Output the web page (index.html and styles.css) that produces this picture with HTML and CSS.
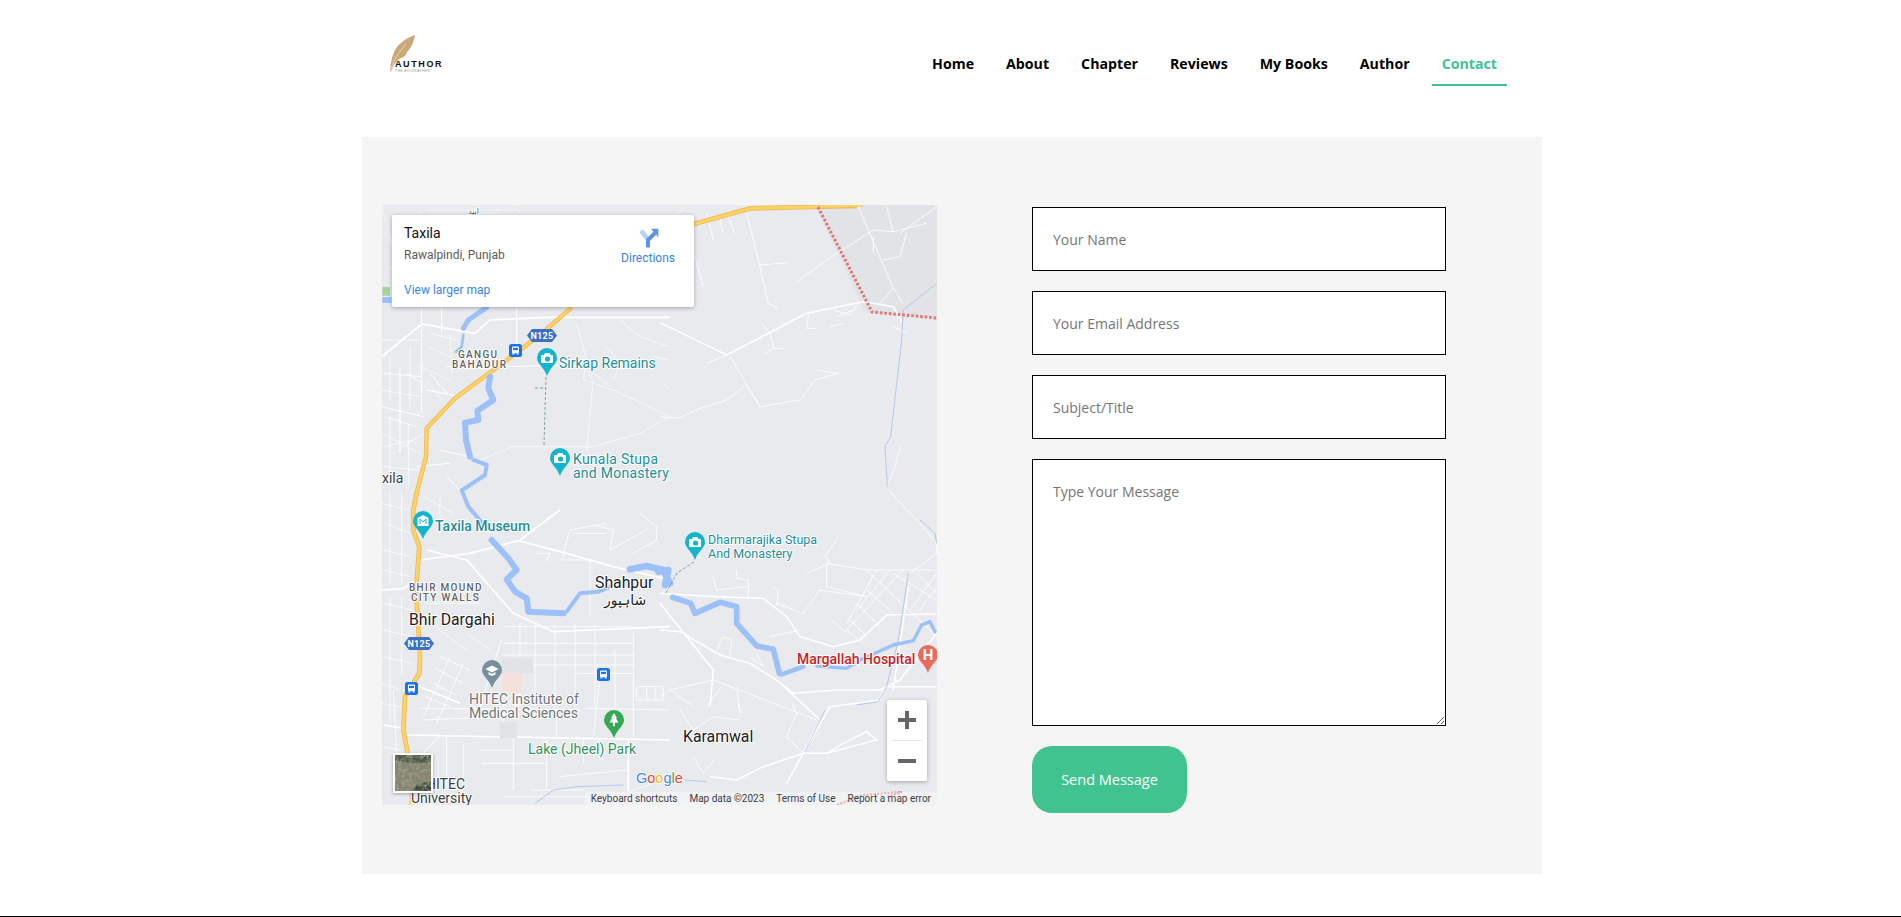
FILE: index.html
```html
<!DOCTYPE html>
<html lang="en">
<head>
<meta charset="utf-8">
<title>Contact</title>
<link rel="stylesheet" href="styles.css">
</head>
<body>
<div class="page">
  <header class="header">
    <a class="logo" href="#">
      <svg class="logo-feather" viewBox="0 0 30 40" width="30" height="40" aria-hidden="true">
        <path d="M3 39 C4 26 6 20 10 14 C15 8 22 4 28 2 C27 9 24 15 20 19 C19 23 15 25 12 26 C9 29 6 32 4 39 Z" fill="#cba878"/>
        <path d="M3 39 C6 28 11 20 19 11" stroke="#fff" stroke-width=".5" fill="none"/>
      </svg>
      <span class="logo-text">
        <span class="logo-name">AUTHOR</span>
        <span class="logo-sub">THE BIOGRAPHER</span>
      </span>
    </a>
    <nav class="nav">
      <a href="#">Home</a>
      <a href="#">About</a>
      <a href="#">Chapter</a>
      <a href="#">Reviews</a>
      <a href="#">My Books</a>
      <a href="#">Author</a>
      <a href="#" class="active">Contact</a>
    </nav>
  </header>

  <main class="panel">
    <div class="map">
      <svg class="map-art" viewBox="0 0 555 600" width="555" height="600" aria-hidden="true">
        <defs>
          <path id="pin" d="M10 0 A10 10 0 0 1 20 10 C20 16 13 19 10 28 C7 19 0 16 0 10 A10 10 0 0 1 10 0Z"/>
          <g id="camera">
            <path d="M4 8 Q4 7 5 7 H7 L8 5 H12.500 L13.500 7 H15 Q16 7 16 8 V14 Q16 15 15 15 H5 Q4 15 4 14Z" fill="#fff"/>
            <circle cx="10.500" cy="11" r="2.600" fill="#12b5cb"/>
          </g>
          <g id="busicon">
            <rect width="13" height="13" rx="2.500" fill="#1a73e8"/>
            <rect x="3" y="2.500" width="7" height="6.800" rx="1" fill="#fff"/>
            <rect x="4" y="3.800" width="5" height="2.300" fill="#1a73e8"/>
            <rect x="3.500" y="9" width="1.700" height="1.500" fill="#fff"/>
            <rect x="7.800" y="9" width="1.700" height="1.500" fill="#fff"/>
          </g>
          <path id="shield" d="M5 0 H25 L30 6.500 L25 13 H5 L0 6.500Z" fill="#3b70c4"/>
        </defs>
        <rect width="555" height="600" fill="#e8eaed"/>
        <path d="M433 0 L555 0 L555 115 L483 107 L433 0Z" fill="#e1e3e6"/>

        <!-- crop 3: top-left -->
        <g transform="translate(-2,-5) scale(.33333)" fill="none" stroke="#fff" stroke-width="3">
          <path stroke-width="5" d="M5 470 L125 372 L285 400 L330 360 L500 352 L870 352"/>
          <path d="M410 320 V440 M125 320 V640 M185 320 V400 M5 620 L130 650 M60 500 V760 M10 520 L125 530 M140 570 L240 590 M150 520 L200 580 M200 500 L370 505 M370 500 L620 495"/>
          <path stroke-width="2" d="M590 370 L620 480 L610 540 L700 570 L870 650 M680 440 L720 490 L700 540 M610 500 L640 540 L620 750 M640 520 L690 560 M620 740 L400 740 L300 780 M620 745 L780 700 L870 650 M820 470 L870 480 M720 360 L780 410 L870 440 M5 700 L120 760 M40 760 L130 700"/>
          <path d="M180 750 L270 770 M200 830 L240 870 M210 790 L110 800 M850 810 L870 805"/>
          <path stroke-width="2" d="M5 420 L120 420 M5 570 L120 590 M30 470 V600 M90 440 V620 M15 650 L110 680 M10 740 L100 720 M30 650 V860 M85 670 V860 M10 800 L120 810 M150 400 L230 420 M140 440 L210 470 M210 400 L215 520 M120 500 L210 540 M140 540 L185 600 M80 520 L140 560"/>
          <path stroke-width="1.500" d="M5 20 L40 150 M20 200 L100 240 M120 30 L140 130 M5 90 L36 130 M140 30 H410 M290 40 H360 M400 15 L425 45"/>
        </g>

        <!-- crop 4: top-right -->
        <g transform="translate(278,-5) scale(.33333)" fill="none" stroke="#fff" stroke-width="2.500">
          <path d="M260 40 L300 200 L325 310 L355 325 M300 195 L385 188 M105 170 L130 260 M140 40 L160 120 M180 55 L190 100 M205 50 L225 100"/>
          <path stroke-width="4.500" d="M0 368 L200 465 L440 340 L610 305 L700 320 L725 365"/>
          <path d="M200 465 L140 490 M210 470 L300 620 L420 600 L465 540 L535 520 L470 510 M300 620 L260 555 L200 600 L120 625 L55 655 L0 650 M330 400 L305 370 M330 400 L340 445 L315 460 M340 445 L370 445 M445 340 L440 385 L470 385 M520 330 L570 345 L590 315 M530 350 L580 330 M510 380 L550 370 M410 245 L500 180 L640 90 L700 95 L800 70 M595 20 L700 265 L660 310 M700 265 L730 310 M680 20 L700 95 M720 100 L830 20 M640 160 L640 110 M670 180 L720 170 L740 100 M700 380 L740 400 M720 740 L705 800 L680 860 M10 550 L25 565"/>
          <path d="M75 20 L50 45"/>
          <path stroke="#a9c2e8" d="M830 250 L730 330 L725 420 L692 710 L675 740 L682 860"/>
        </g>

        <!-- crop 5: bottom-left -->
        <g transform="translate(-2,285) scale(.33333)" fill="none" stroke="#fff" stroke-width="2.500">
          <path stroke-width="5" d="M5 300 L70 295 L115 265 M120 210 L270 190 L415 152 L560 190 L700 230 L870 270 M140 180 L260 210 L400 370 L520 425 L870 410 M75 735 L870 750 M10 705 L70 715 M745 745 V905 M120 590 L240 640 M540 60 L420 150"/>
          <path d="M375 410 H760 M370 460 H760 M365 495 H765 M365 525 H765 M590 550 H760 M420 400 V650 M465 400 V650 M525 400 V650 M585 400 V650 M645 400 V650 M705 480 V720 M760 430 V740 M365 450 L300 650 M180 500 L270 540 M165 535 L250 580 M150 575 L230 615 M135 620 L210 650 M210 500 L130 680 M250 520 L170 700 M120 655 L600 660 M620 655 L870 660 M130 690 L360 680 M370 640 V740 M530 660 V740 M660 560 L640 740 M770 590 H850 V630 H770 Z M800 590 V630 M825 590 V630 M200 740 V900 M250 760 V880 M300 780 H400 M400 740 V900 M305 820 H500 M500 750 V900 M610 745 V820 M90 790 H30 M40 600 L50 800 M680 100 L570 120 L545 210 L630 210 L630 380 M640 105 L700 120 L690 180 L800 120 M780 70 L830 110 L830 150 L760 190 M580 130 H680 M470 190 L510 190 L500 215 M130 790 L180 735 M540 860 L740 840 M450 900 H610 M370 920 H620 M750 905 L870 860"/>
          <path stroke-width="2" d="M5 40 L90 60 M15 100 L90 130 M30 0 V280 M65 0 V280 M10 180 L90 200 M10 240 L90 260 M10 340 L100 360 M10 420 L100 440 M30 320 V700 M65 320 V560 M10 500 L100 520 M5 580 L60 600 M5 640 L60 650 M130 20 L220 70 M140 70 L200 120 M180 20 V130 M140 340 L300 340 M150 400 L260 480 M260 430 L330 480 M10 770 L60 780"/>
          <path stroke="#a9c2e8" d="M465 940 L520 900 L590 890 L730 885"/>
        </g>

        <!-- crop 6: bottom-right -->
        <g transform="translate(278,285) scale(.33333)" fill="none" stroke="#fff" stroke-width="2.500">
          <path stroke-width="4.500" d="M0 310 L170 320 L310 325 L380 380 L420 440 L520 470 L600 450 L680 375 L830 372 M0 420 L60 425 L180 495 L270 520 L350 570 L400 610 L530 600 L660 600 L720 570 L830 430 M0 340 L160 540 L150 650 M350 570 L480 690 M480 690 L430 790 L380 880 M670 600 L660 630 L510 650 L430 790 L310 830 L230 870 L150 860 M430 790 L500 790 L650 750 L620 725 L550 760 L500 790 M685 590 L830 590 M745 290 L700 600"/>
          <path d="M500 220 L620 240 L830 240 M620 240 L830 440 M650 240 L560 400 M690 240 L590 360 M730 240 L560 420 L610 460 M620 300 L700 370 M590 340 L660 410 M570 390 L620 440 M700 250 L830 330 M770 250 L830 310 M830 250 L750 360 M830 290 L780 360 M500 220 V270 L500 290 L620 320 L480 300 L430 370 L350 340 M230 240 V265 L265 270 V320 M335 290 L355 300 L350 345 M160 260 L170 300 L260 290 M530 150 L495 200 L510 220 L440 250 M685 0 L770 90 L830 160 V190 L750 250 M515 390 L560 430 M330 440 L420 420 M170 480 L190 440 L215 450 L210 495 M270 500 L310 530 L290 490 M395 640 L410 670 L380 740 L430 790 M230 590 L240 670 L235 640 M100 650 L30 600 L0 620 M30 600 L160 570 L470 690 M60 660 L100 720 L160 680 L240 690 M100 800 L130 850 L160 810 M185 590 L140 650"/>
          <path stroke="#a9c2e8" stroke-width="2.500" d="M745 250 L715 450 L680 590 L655 635 L590 645 M495 660 L435 785"/>
          <path stroke="#a9c2e8" d="M75 870 L140 875 M830 160 L825 130 L780 90"/>
        </g>

        <!-- highway -->
        <g transform="translate(-2,-5) scale(.33333)" fill="none" stroke-linejoin="round">
          <path stroke="#f0b94d" stroke-width="13" d="M575 322 L480 405 L340 510 L225 595 L140 685 L138 770 L112 870"/>
          <path stroke="#fdd268" stroke-width="8" d="M575 322 L480 405 L340 510 L225 595 L140 685 L138 770 L112 870"/>
        </g>
        <g transform="translate(278,-5) scale(.33333)" fill="none" stroke-linejoin="round">
          <path stroke="#f0b94d" stroke-width="14" d="M102 72 L272 25 L480 20 L590 18"/>
          <path stroke="#fdd268" stroke-width="9" d="M102 72 L272 25 L480 20 L610 15"/>
        </g>
        <g transform="translate(-2,285) scale(.33333)" fill="none" stroke-linejoin="round">
          <path stroke="#f0b94d" stroke-width="14" d="M112 0 L100 60 L100 120 L118 170 L108 300 L120 500 L118 550 L75 620 L70 720 L85 800"/>
          <path stroke="#fdd268" stroke-width="9" d="M112 0 L100 60 L100 120 L118 170 L108 300 L120 500 L118 550 L75 620 L70 720 L85 800"/>
          <path stroke="#fdd268" stroke-width="6" d="M90 910 V945"/>
        </g>

        <!-- river -->
        <g transform="translate(-2,-5) scale(.33333)" fill="none" stroke="#9cc0f9" stroke-linecap="round" stroke-linejoin="round">
          <path stroke-width="15" d="M320 322 L265 360 L250 385"/>
          <path stroke-width="8" d="M250 405 L245 440 L228 455"/>
          <path stroke-width="18" d="M330 530 L325 565 L340 600 L292 632 L295 660 L255 668 L258 720 L270 770"/>
          <path stroke-width="12" d="M280 780 L320 795 L315 825 L250 868"/>
          <path stroke-width="26" stroke="#a9d19b" stroke-linecap="butt" d="M7 274 H30"/>
          <path stroke-width="18" stroke-linecap="butt" d="M7 300 H34"/>
        </g>
        <g transform="translate(-2,285) scale(.33333)" fill="none" stroke="#9cc0f9" stroke-linecap="round" stroke-linejoin="round">
          <path stroke-width="12" d="M245 0 L265 50 L320 115"/>
          <path stroke-width="18" d="M335 150 L385 205 L410 240 L380 268 L405 305 L440 325 L445 365 L550 370"/>
          <path stroke-width="12" d="M560 365 L600 310 L655 305 L690 290"/>
          <path stroke-width="20" d="M750 238 L800 228 L850 240 L870 280"/>
        </g>
        <g transform="translate(278,285) scale(.33333)" fill="none" stroke="#9cc0f9" stroke-linecap="round" stroke-linejoin="round">
          <path stroke-width="20" d="M-5 245 L25 240 L15 285"/>
          <path stroke-width="17" d="M38 322 L92 340 L105 370 L180 337 L230 350 L230 400 L290 468 L340 478 L358 550"/>
          <path stroke-width="14" d="M365 553 L430 530"/>
          <path stroke-width="10" d="M470 528 L560 535 L600 510 L700 465 L760 452 L785 405 L810 395 L825 425"/>
        </g>

        <!-- building tints -->
        <rect x="120" y="453" width="31" height="15" fill="#e1e3e6"/>
        <rect x="120" y="468" width="20" height="20" fill="#f6e0dc"/>
        <rect x="118" y="517" width="17" height="16" fill="#e1e3e6"/>

        <!-- dashed trails -->
        <path d="M164 172 L162 240 M153 183 H164" stroke="#7fa98f" stroke-width="1" stroke-dasharray="3 2" fill="none"/>
        <path d="M312 357 L295 368 L284 388" stroke="#7fa98f" stroke-width="1" stroke-dasharray="3 2" fill="none"/>

        <!-- border lines -->
        <path d="M436 2 L490 107 L555 113" stroke="#e07777" stroke-width="3" stroke-dasharray="2.500 2" fill="none"/>
        <path d="M455 600 L480 590 L520 587 L505 592" stroke="#e07777" stroke-width="2" stroke-dasharray="2 1.500" fill="none"/>

        <!-- bus stops -->
        <use href="#busicon" x="127" y="139"/>
        <use href="#busicon" x="23" y="477"/>
        <use href="#busicon" x="215" y="463"/>

        <!-- shields -->
        <g transform="translate(145,124)"><use href="#shield"/><text x="15" y="10" class="shield">N125</text></g>
        <g transform="translate(22,432)"><use href="#shield"/><text x="15" y="10" class="shield">N125</text></g>

        <!-- pins -->
        <g transform="translate(155,143)"><use href="#pin" fill="#12b5cb"/><use href="#camera"/></g>
        <g transform="translate(168,243)"><use href="#pin" fill="#12b5cb"/><use href="#camera"/></g>
        <g transform="translate(303,327)"><use href="#pin" fill="#12b5cb"/><use href="#camera"/></g>
        <g transform="translate(31,306)"><use href="#pin" fill="#12b5cb"/><path d="M4.500 15 V7 L10 4 L15.500 7 V15Z" fill="#fff"/><path d="M7 13 V8 L10 11 L13 8 V13" stroke="#12b5cb" stroke-width="1" fill="none"/></g>
        <g transform="translate(100,455)"><use href="#pin" fill="#78909c"/><path d="M3.500 9 L10 5.500 L16.500 9 L10 12.500Z M6.500 12 L10 14 L13.500 12 V14.500 L10 16 L6.500 14.500Z" fill="#fff"/></g>
        <g transform="translate(222,505)"><use href="#pin" fill="#34a853"/><path d="M10 3 L13 8 H11.800 L14.500 12.500 H11 V16 H9 V12.500 H5.500 L8.200 8 H7Z" fill="#fff"/></g>
        <g transform="translate(536,440)"><use href="#pin" fill="#ea6a5e"/><text x="10" y="15" class="pin-h">H</text></g>

        <!-- labels -->
        <text x="86" y="9" class="town tiny">ابید</text>
        <text x="177" y="163" class="lbl teal">Sirkap Remains</text>
        <text x="191" y="259" class="lbl teal wide">Kunala Stupa</text>
        <text x="191" y="273" class="lbl teal wide">and Monastery</text>
        <text x="326" y="339" class="lbl teal sm">Dharmarajika Stupa</text>
        <text x="326" y="353" class="lbl teal sm">And Monastery</text>
        <text x="53" y="326" class="lbl teal bold">Taxila Museum</text>
        <text x="0" y="278" class="lbl dark">xila</text>
        <text x="76" y="153" class="caps">GANGU</text>
        <text x="70" y="163" class="caps">BAHADUR</text>
        <text x="27" y="386" class="caps">BHIR MOUND</text>
        <text x="29" y="396" class="caps">CITY WALLS</text>
        <text x="27" y="420" class="town">Bhir Dargahi</text>
        <text x="213" y="383" class="town">Shahpur</text>
        <text x="222" y="400" class="town urdu">شاہپور</text>
        <text x="301" y="537" class="town">Karamwal</text>
        <text x="87" y="499" class="lbl edu">HITEC Institute of</text>
        <text x="87" y="513" class="lbl edu">Medical Sciences</text>
        <text x="146" y="549" class="lbl park">Lake (Jheel) Park</text>
        <text x="415" y="459" class="lbl red">Margallah Hospital</text>
        <text x="44" y="584" class="lbl edu darker">HITEC</text>
        <text x="29" y="598" class="lbl edu darker">University</text>
        <text x="254" y="578" class="google"><tspan fill="#4285f4">G</tspan><tspan fill="#ea4335">o</tspan><tspan fill="#fbbc05">o</tspan><tspan fill="#4285f4">g</tspan><tspan fill="#34a853">l</tspan><tspan fill="#ea4335">e</tspan></text>
      </svg>

      <div class="info">
        <div class="info-main">
          <div class="info-title">Taxila</div>
          <div class="info-addr">Rawalpindi, Punjab</div>
          <a class="info-link" href="#">View larger map</a>
        </div>
        <a class="info-dir" href="#">
          <svg viewBox="0 0 22 22" width="22" height="22" aria-hidden="true">
            <path d="M4 4.700 L10.700 13" stroke="#b5d2f5" stroke-width="4.500" fill="none"/>
            <path d="M11 21.500 V14 L18 7" stroke="#5b94e3" stroke-width="4" fill="none"/>
            <path d="M14 2.800 H21.300 V11.300Z" fill="#5b94e3"/>
          </svg>
          <span class="info-dir-label">Directions</span>
        </a>
      </div>

      <div class="zoomctl">
        <button class="zoombtn" type="button" aria-label="Zoom in"><svg viewBox="0 0 18 18" width="18" height="18"><path d="M0 7 H7 V0 H11 V7 H18 V11 H11 V18 H7 V11 H0Z" fill="#666"/></svg></button>
        <div class="zoomsep"></div>
        <button class="zoombtn" type="button" aria-label="Zoom out"><svg viewBox="0 0 18 18" width="18" height="18"><rect y="7" width="18" height="4" fill="#666"/></svg></button>
      </div>

      <svg class="thumb" viewBox="0 0 36 36" width="36" height="36" aria-hidden="true">
        <filter id="sat" x="0" y="0" width="100%" height="100%">
          <feTurbulence type="fractalNoise" baseFrequency=".28" numOctaves="3" seed="7"/>
          <feColorMatrix type="matrix" values="0 0 0 0 .36  0 0 0 0 .38  0 0 0 0 .30  0 0 0 -1.800 1.150"/>
        </filter>
        <rect width="36" height="36" fill="#84836b"/>
        <path d="M0 0 H36 V7 L20 9 L0 5Z" fill="#4f5749"/>
        <path d="M20 30 L36 26 V36 H18Z" fill="#3f4a38"/>
        <rect width="36" height="36" filter="url(#sat)"/>
      </svg>

      <div class="attrib">
        <span>Keyboard shortcuts</span>
        <span>Map data ©2023</span>
        <span>Terms of Use</span>
        <span>Report a map error</span>
      </div>
    </div>

    <form class="form">
      <input class="field" type="text" placeholder="Your Name">
      <input class="field" type="email" placeholder="Your Email Address">
      <input class="field" type="text" placeholder="Subject/Title">
      <textarea class="field area" placeholder="Type Your Message"></textarea>
      <button class="send" type="button">Send Message</button>
    </form>
  </main>
</div>
<footer class="footer"></footer>
</body>
</html>
```

FILE: styles.css
```css
* { box-sizing: border-box; }
html, body { margin: 0; padding: 0; background: #fff; }
body { font-family: "Open Sans", "Noto Sans", sans-serif; height: 917px; overflow: hidden; display: flex; flex-direction: column; }

.page { width: 1180px; margin-left: 362px; }

.header { height: 137px; display: flex; justify-content: space-between; align-items: flex-start; }
.logo { display: flex; align-items: flex-end; margin: 33px 0 0 25px; text-decoration: none; }
.logo-feather { display: block; }
.logo-text { display: flex; flex-direction: column; margin-left: -22px; position: relative; top: 1px; }
.logo-name { font-family: "Liberation Sans", sans-serif; font-size: 9px; font-weight: 700; letter-spacing: 1.6px; color: #111; line-height: 9px; }
.logo-sub { font-family: "Liberation Sans", sans-serif; font-size: 3.5px; letter-spacing: .3px; color: #999; line-height: 5px; }

.nav { display: flex; gap: 12px; margin: 46px 35px 0 0; }
.nav a { display: block; height: 40px; padding: 8px 10px 0; font-size: 14.2px; line-height: 20px; font-weight: 700; color: #000; text-decoration: none; }
.nav a.active { color: #41c390; border-bottom: 2px solid #41c390; }

.panel { height: 737px; background: #f5f5f5; display: flex; align-items: flex-start; padding: 68px 0 0 20px; }

.map { position: relative; width: 555px; height: 600px; flex: none; overflow: hidden; font-family: Roboto, sans-serif; }
.map-art { display: block; }
.map-art text { font-family: Roboto, sans-serif; paint-order: stroke; stroke: #fff; stroke-width: 2px; stroke-linejoin: round; }
.lbl { font-size: 14px; }
.map-art .sm { font-size: 12.5px; }
.map-art .wide { letter-spacing: .25px; }
.teal { fill: #1e8e96; }
.lbl.bold { font-weight: 500; }
.dark { fill: #3c4043; }
.caps { font-size: 10px; letter-spacing: 1.3px; fill: #5f6368; font-weight: 500; }
.town { font-size: 15.8px; fill: #202124; }
.map-art .urdu { font-size: 14px; font-family: "DejaVu Sans", sans-serif; }
.map-art .tiny { font-size: 8px; font-family: "DejaVu Sans", sans-serif; fill: #5f6368; }
.edu { fill: #70757a; }
.edu.darker { fill: #3c4043; }
.park { fill: #2f9460; }
.red { fill: #c5221f; font-weight: 500; }
.map-art .shield { font-size: 9px; font-weight: 700; fill: #fff; text-anchor: middle; stroke: none; letter-spacing: .3px; }
.map-art .pin-h { font-size: 15px; font-weight: 700; fill: #fff; text-anchor: middle; stroke: none; }
.map-art .google { font-family: "Liberation Sans", sans-serif; font-size: 14.5px; font-weight: 400; stroke-width: 1.5px; }

.info { position: absolute; left: 10px; top: 10px; width: 302px; height: 92px; background: #fff; box-shadow: 0 1px 4px rgba(0,0,0,.3); border-radius: 2px; display: flex; justify-content: space-between; padding: 9px 19px 0 12px; }
.info-main { display: flex; flex-direction: column; }
.info-title { font-size: 14px; line-height: 18px; font-weight: 400; color: #111; }
.info-addr { font-size: 12px; line-height: 16px; margin-top: 5px; color: #5b5b5b; }
.info-link { font-size: 12px; line-height: 16px; margin-top: 19px; color: #3a84df; text-decoration: none; }
.info-dir { display: flex; flex-direction: column; align-items: center; font-size: 12px; line-height: 14px; color: #3a84df; text-decoration: none; padding-top: 2px; }
.info-dir-label { margin-top: 3px; }

.zoomctl { position: absolute; left: 505px; top: 495px; width: 40px; height: 81px; background: #fff; box-shadow: 0 1px 4px rgba(0,0,0,.3); border-radius: 2px; display: flex; flex-direction: column; align-items: center; }
.zoombtn { width: 40px; height: 40px; border: 0; padding: 0; background: none; display: flex; align-items: center; justify-content: center; }
.zoomsep { width: 30px; height: 1px; background: #e6e6e6; }

.thumb { position: absolute; left: 11px; top: 548px; width: 40px; height: 40px; border: 2px solid #fff; box-shadow: 0 1px 3px rgba(0,0,0,.3); }

.attrib { position: absolute; right: 0; bottom: 0; height: 13px; display: flex; gap: 12px; padding: 0 6px; background: rgba(255,255,255,.4); font-size: 10px; line-height: 13px; color: #3c4043; white-space: nowrap; }

.form { width: 414px; margin: 2px 0 0 95px; display: flex; flex-direction: column; gap: 20px; }
.field { display: block; width: 414px; height: 64px; padding: 0 20px; border: 1.5px solid #000; background: #fff; border-radius: 0; font-family: "Open Sans", sans-serif; font-size: 14px; color: #333; outline: 0; }
.field::placeholder { color: #757575; opacity: 1; }
.area { height: 267px; padding: 22px 20px; resize: vertical; }
.send { width: 155px; height: 67px; border: 0; border-radius: 20px; background: #41c390; color: #fff; font-family: "Open Sans", sans-serif; font-size: 14.5px; padding: 0; }

.footer { flex: none; margin-top: auto; height: 1px; background: #000; }
```
